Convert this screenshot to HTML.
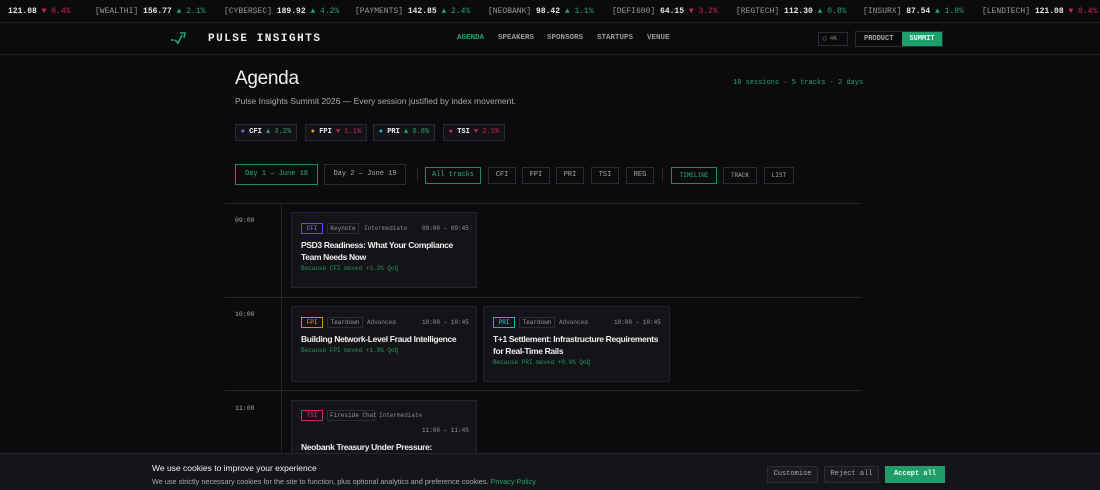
<!DOCTYPE html>
<html><head><meta charset="utf-8"><style>
*{box-sizing:border-box;margin:0;padding:0}
body{width:1100px;height:490px;overflow:hidden;background:#0b0b0e;color:#ddd;font-family:"Liberation Sans",sans-serif;position:relative}
.mono{font-family:"Liberation Mono",monospace}
.ticker{position:absolute;top:0;left:0;width:1100px;height:23px;border-bottom:1px solid #1f1f24;font-family:"Liberation Mono",monospace;font-size:8px;white-space:nowrap;line-height:23px;color:#999}
.ticker span{position:absolute;top:0}
.ticker b{color:#e8e8e8}
.up{color:#27a36a}.dn{color:#d3244f}
.nav{position:absolute;top:23px;left:0;width:1100px;height:32px;border-bottom:1px solid #1f1f24}
.logo{position:absolute;left:208px;top:10px;font-family:"Liberation Mono",monospace;font-weight:bold;font-size:11px;letter-spacing:1.5px;color:#eee}
.links{position:absolute;top:11px;font-family:"Liberation Mono",monospace;font-size:7.5px;font-weight:bold;color:#999}
.links span{position:absolute;white-space:nowrap}
.abs{position:absolute}
.chip{position:absolute;border:1px solid #2a2a30;background:#131317;font-family:"Liberation Mono",monospace;font-size:7px;color:#bbb;text-align:center}
.btn{position:absolute;border:1px solid #2c2c32;font-family:"Liberation Mono",monospace;font-size:7px;color:#aaa;text-align:center;height:17px;line-height:15px}
.btn.on{border-color:#1f8a5c;color:#2fae75}
.hl{position:absolute;left:225px;width:637px;height:1px;background:#25252a}
.card{position:absolute;background:#141418;border:1px solid #25252b}
.tag{position:absolute;font-family:"Liberation Mono",monospace;font-size:6px;height:11px;line-height:9px;padding:0 2px;border:1px solid #2c2c32;color:#999;text-align:center;white-space:nowrap}
.ct{position:absolute;font-size:8.5px;font-weight:bold;color:#eee;line-height:12px;letter-spacing:-0.35px}
.cb{position:absolute;font-family:"Liberation Mono",monospace;font-size:6px;color:#22995f}
.tm{position:absolute;font-family:"Liberation Mono",monospace;font-size:6.5px;color:#aaa;white-space:nowrap}
</style></head><body>
<div class="ticker">
<span style="left:8px"><b>121.08</b> <i class="dn" style="font-style:normal">▼ 0.4%</i></span>
<span style="left:95px">[WEALTHI] <b>156.77</b> <i class="up" style="font-style:normal">▲ 2.1%</i></span>
<span style="left:224px">[CYBERSEC] <b>189.92</b> <i class="up" style="font-style:normal">▲ 4.2%</i></span>
<span style="left:355px">[PAYMENTS] <b>142.85</b> <i class="up" style="font-style:normal">▲ 2.4%</i></span>
<span style="left:488px">[NEOBANK] <b>98.42</b> <i class="up" style="font-style:normal">▲ 1.1%</i></span>
<span style="left:612px">[DEFI600] <b>64.15</b> <i class="dn" style="font-style:normal">▼ 3.2%</i></span>
<span style="left:736px">[REGTECH] <b>112.30</b> <i class="up" style="font-style:normal">▲ 0.8%</i></span>
<span style="left:863px">[INSURX] <b>87.54</b> <i class="up" style="font-style:normal">▲ 1.9%</i></span>
<span style="left:982px">[LENDTECH] <b>121.08</b> <i class="dn" style="font-style:normal">▼ 0.4%</i></span>
</div>
<div class="nav">
<svg class="abs" style="left:170px;top:8px" width="18" height="14" viewBox="0 0 18 14"><path d="M1 9h3M5 9l3 3 4-8M10 2l5 0-1 5" stroke="#27a36a" stroke-width="1.6" fill="none"/></svg>
<div class="logo">PULSE INSIGHTS</div>
<div class="links"><span style="left:457px;color:#27a36a">AGENDA</span><span style="left:498px">SPEAKERS</span><span style="left:547px">SPONSORS</span><span style="left:597px">STARTUPS</span><span style="left:647px">VENUE</span></div>
<div class="abs" style="left:818px;top:9px;width:30px;height:14px;border:1px solid #2c2c32;font-size:6px;color:#888;line-height:12px;font-family:'Liberation Mono',monospace">&nbsp;◯ ⌘K</div>
<div class="abs" style="left:855px;top:8px;width:88px;height:16px;border:1px solid #2c2c32"></div>
<div class="abs mono" style="left:864px;top:12px;font-size:7px;font-weight:bold;color:#aaa">PRODUCT</div>
<div class="abs mono" style="left:902px;top:9px;width:40px;height:14px;background:#1f9e6a;font-size:7px;font-weight:bold;color:#dff;text-align:center;line-height:14px">SUMMIT</div>
</div>
<div class="abs" style="left:235px;top:68px;font-size:19px;color:#f0f0f0;letter-spacing:-0.3px">Agenda</div>
<div class="abs" style="left:235px;top:96px;font-size:8.5px;color:#aaa">Pulse Insights Summit 2026 — Every session justified by index movement.</div>
<div class="abs mono" style="left:733px;top:79px;font-size:7px;color:#27a36a">10 sessions · 5 tracks · 2 days</div>
<div class="chip" style="left:235px;top:124px;width:62px;height:17px;line-height:15px"><span style="color:#6a5cff">●</span> <b style="color:#eee">CFI</b> <span class="up">▲ 3.2%</span></div>
<div class="chip" style="left:305px;top:124px;width:62px;height:17px;line-height:15px"><span style="color:#f29a1a">●</span> <b style="color:#eee">FPI</b> <span class="dn">▼ 1.1%</span></div>
<div class="chip" style="left:373px;top:124px;width:62px;height:17px;line-height:15px"><span style="color:#1ab8c9">●</span> <b style="color:#eee">PRI</b> <span class="up">▲ 0.8%</span></div>
<div class="chip" style="left:443px;top:124px;width:62px;height:17px;line-height:15px"><span style="color:#e0237a">●</span> <b style="color:#eee">TSI</b> <span class="dn">▼ 2.1%</span></div>
<div class="btn on" style="left:235px;top:164px;width:83px;height:21px;line-height:19px">Day 1 — June 18</div>
<div class="btn" style="left:324px;top:164px;width:82px;height:21px;line-height:19px">Day 2 — June 19</div>
<div class="abs" style="left:417px;top:168px;width:1px;height:13px;background:#2a2a30"></div>
<div class="btn on" style="left:425px;top:167px;width:56px">All tracks</div>
<div class="btn" style="left:488px;top:167px;width:28px">CFI</div>
<div class="btn" style="left:522px;top:167px;width:28px">FPI</div>
<div class="btn" style="left:556px;top:167px;width:28px">PRI</div>
<div class="btn" style="left:591px;top:167px;width:28px">TSI</div>
<div class="btn" style="left:626px;top:167px;width:28px">REG</div>
<div class="abs" style="left:662px;top:168px;width:1px;height:13px;background:#2a2a30"></div>
<div class="btn on" style="left:671px;top:167px;width:46px;font-size:6px">TIMELINE</div>
<div class="btn" style="left:723px;top:167px;width:34px;font-size:6px">TRACK</div>
<div class="btn" style="left:764px;top:167px;width:30px;font-size:6px">LIST</div>
<div class="hl" style="top:203px"></div><div class="hl" style="top:297px"></div><div class="hl" style="top:390px"></div>
<div class="abs" style="left:281px;top:203px;width:1px;height:287px;background:#25252a"></div>
<div class="tm" style="left:235px;top:217px">09:00</div>
<div class="tm" style="left:235px;top:311px">10:00</div>
<div class="tm" style="left:235px;top:405px">11:00</div>

<div class="card" style="left:291px;top:212px;width:186px;height:76px">
<div class="tag" style="left:9px;top:10px;width:22px;border-color:#5a4ee0;color:#8a7fff">CFI</div>
<div class="tag" style="left:35px;top:10px;width:32px">Keynote</div>
<div class="tm" style="left:72px;top:12px;color:#888;font-size:6px">Intermediate</div>
<div class="tm" style="left:130px;top:12px;color:#999;font-size:6px">09:00 – 09:45</div>
<div class="ct" style="left:9px;top:26px;width:172px">PSD3 Readiness: What Your Compliance Team Needs Now</div>
<div class="cb" style="left:9px;top:52px">Because CFI moved +3.2% QoQ</div></div>

<div class="card" style="left:291px;top:306px;width:186px;height:76px">
<div class="tag" style="left:9px;top:10px;width:22px;border-color:#d88a1a;color:#f0a030">FPI</div>
<div class="tag" style="left:35px;top:10px;width:36px">Teardown</div>
<div class="tm" style="left:75px;top:12px;color:#888;font-size:6px">Advanced</div>
<div class="tm" style="left:130px;top:12px;color:#999;font-size:6px">10:00 – 10:45</div>
<div class="ct" style="left:9px;top:26px;width:175px">Building Network-Level Fraud Intelligence</div>
<div class="cb" style="left:9px;top:40px">Because FPI moved +1.8% QoQ</div></div>

<div class="card" style="left:483px;top:306px;width:187px;height:76px">
<div class="tag" style="left:9px;top:10px;width:22px;border-color:#1ab0c0;color:#3cc8d8">PRI</div>
<div class="tag" style="left:35px;top:10px;width:36px">Teardown</div>
<div class="tm" style="left:75px;top:12px;color:#888;font-size:6px">Advanced</div>
<div class="tm" style="left:130px;top:12px;color:#999;font-size:6px">10:00 – 10:45</div>
<div class="ct" style="left:9px;top:26px;width:168px">T+1 Settlement: Infrastructure Requirements for Real-Time Rails</div>
<div class="cb" style="left:9px;top:52px">Because PRI moved +0.6% QoQ</div></div>

<div class="card" style="left:291px;top:400px;width:186px;height:90px">
<div class="tag" style="left:9px;top:9px;width:22px;border-color:#d0236f;color:#e0408a">TSI</div>
<div class="tag" style="left:35px;top:9px;width:48px">Fireside Chat</div>
<div class="tm" style="left:87px;top:11px;color:#888;font-size:6px">Intermediate</div>
<div class="tm" style="left:130px;top:26px;color:#999;font-size:6px">11:00 – 11:45</div>
<div class="ct" style="left:9px;top:40px;width:175px">Neobank Treasury Under Pressure:</div></div>

<div class="abs" style="left:0;top:453px;width:1100px;height:37px;background:#151519;border-top:1px solid #26262b"></div>
<div class="abs" style="left:152px;top:463px;font-size:8.5px;color:#f0f0f0">We use cookies to improve your experience</div>
<div class="abs" style="left:152px;top:477px;font-size:7.3px;color:#aaa;white-space:nowrap">We use strictly necessary cookies for the site to function, plus optional analytics and preference cookies. <span style="color:#27a36a">Privacy Policy</span></div>
<div class="btn" style="left:767px;top:466px;width:51px;height:17px;background:#1a1a1f">Customise</div>
<div class="btn" style="left:824px;top:466px;width:55px;height:17px;background:#1a1a1f">Reject all</div>
<div class="btn" style="left:885px;top:466px;width:60px;height:17px;background:#1f9e6a;border-color:#1f9e6a;color:#eafff4;font-weight:bold">Accept all</div>
</body></html>
